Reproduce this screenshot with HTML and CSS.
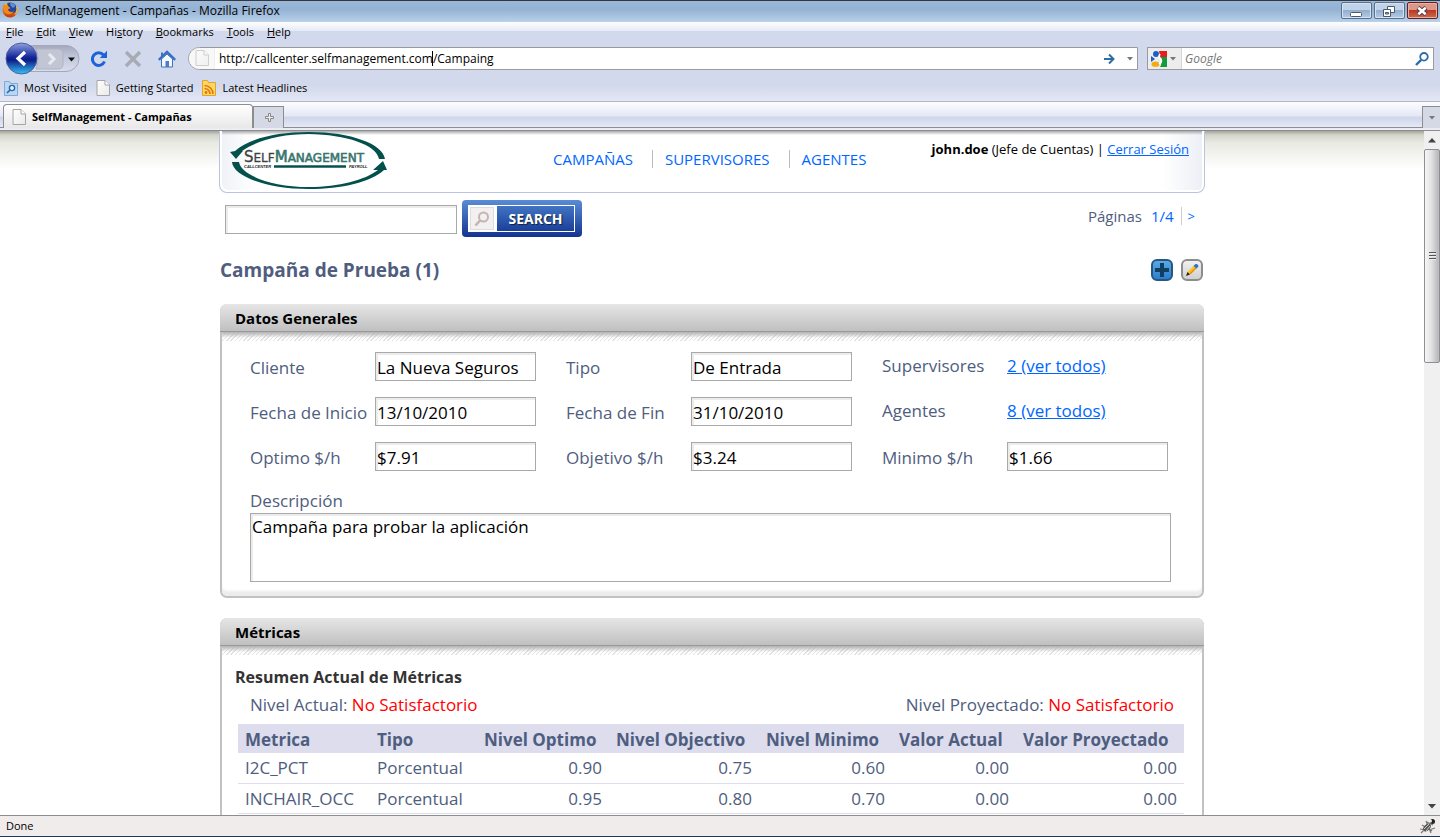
FILE: index.html
```html
<!DOCTYPE html>
<html lang="es">
<head>
<meta charset="utf-8">
<title>SelfManagement - Campañas</title>
<link rel="stylesheet" href="styles.css">
</head>
<body>
<svg class="defs" width="0" height="0" aria-hidden="true">
  <defs>
    <linearGradient id="pageFill" x1="0" y1="0" x2="1" y2="1"><stop offset="0" stop-color="#fff"/><stop offset="1" stop-color="#e9e9e9"/></linearGradient>
    <linearGradient id="foxFill" x1="0" y1="0" x2="0" y2="1"><stop offset="0" stop-color="#ffb52b"/><stop offset="1" stop-color="#c8340c"/></linearGradient>
    <symbol id="doc" viewBox="0 0 14 16"><path d="M1 .5h8l4.500 4.500v10.500H1z" fill="url(#pageFill)" stroke="#a5a5a5"/><path d="M9 .5V5h4.500" fill="#fff" stroke="#a5a5a5"/></symbol>
  </defs>
</svg>

<header class="chrome">
  <div class="titlebar">
    <svg class="fox" viewBox="0 0 16 16"><circle cx="8" cy="8" r="7.500" fill="url(#foxFill)"/><path d="M5 1.500c3-2 8-.5 9.500 3 .8 3-.5 5.500-3 6.500C8 12 5 10 5 7l3-.5L6 4z" fill="#24459a"/><path d="M8 1c3-.5 5 1 5.500 3L11 6 8.500 3.500z" fill="#5b8fd6"/><path d="M.8 4.500 2 2l2 2 2.500.5L8.500 6 6 7.200c.5 2.500 3 3.500 6 2-2 3.500-7 4-9.500 1z" fill="#f08a1a"/><path d="M14.500 4.500c1 3 .5 6-1.500 8" fill="none" stroke="#ffd24a"/></svg>
    <span class="window-title">SelfManagement - Campañas - Mozilla Firefox</span>
    <button class="win-btn" aria-label="Minimize"><svg width="30" height="16"><rect x="9.500" y="9.500" width="11" height="4" rx="1" fill="#fff" stroke="#4d586d"/></svg></button>
    <button class="win-btn" aria-label="Restore"><svg width="30" height="16"><path d="M13.500 3.500h7v6h-7z" fill="#fff" stroke="#4d586d"/><path d="M9.500 6.500h7v7h-7z" fill="#fff" stroke="#4d586d"/><path d="M11.500 9.500h3v1.500h-3z" fill="#9db7d4" stroke="#4d586d"/></svg></button>
    <button class="win-btn win-close" aria-label="Close"><svg width="30" height="16"><path d="m11 4.500 8 7m0-7-8 7" stroke="#5a4048" stroke-width="4.500"/><path d="m11.300 4.800 7.400 6.400m0-6.400-7.400 6.400" stroke="#fff" stroke-width="2.500"/></svg></button>
  </div>

  <nav class="menubar">
    <a href="#"><u>F</u>ile</a><a href="#"><u>E</u>dit</a><a href="#"><u>V</u>iew</a><a href="#">Hi<u>s</u>tory</a><a href="#"><u>B</u>ookmarks</a><a href="#"><u>T</u>ools</a><a href="#"><u>H</u>elp</a>
  </nav>

  <div class="toolbar">
    <svg class="backfwd" viewBox="0 0 78 34">
      <defs>
        <linearGradient id="well" x1="0" y1="0" x2="0" y2="1"><stop offset="0" stop-color="#a5a9bd"/><stop offset=".4" stop-color="#bfc4d8"/><stop offset="1" stop-color="#d9deee"/></linearGradient>
        <linearGradient id="back" x1="0" y1="0" x2="0" y2="1"><stop offset="0" stop-color="#8fa2dc"/><stop offset=".45" stop-color="#16299c"/><stop offset=".55" stop-color="#0d1c86"/><stop offset="1" stop-color="#35c3f5"/></linearGradient>
      </defs>
      <path d="M14 3.500h50a12.500 12.500 0 0 1 0 26H14a14 14 0 0 1 0-26z" fill="url(#well)" stroke="#a4a8ba"/>
      <path d="M34 7h22q5 0 5 5v10q0 5-5 5H34q4-10 0-20z" fill="#c2c6d4" stroke="#aeb3c4"/>
      <circle cx="19.500" cy="16.500" r="15.500" fill="url(#back)" stroke="#4a5ca6"/>
      <path d="m23 10-7 6.500 7 6.500" fill="none" stroke="#fff" stroke-width="3.200"/>
      <path d="m47 12 5 5-5 5" fill="none" stroke="#e8eaf2" stroke-width="3"/>
      <path d="M66 15.500h7l-3.500 4z" fill="#111"/>
    </svg>
    <svg class="tool tool-reload" viewBox="0 0 18 18"><path d="M14.500 11.500A6.300 6.300 0 1 1 13.500 5" fill="none" stroke="#1d63d8" stroke-width="3"/><path d="M17 .8V8H9.800z" fill="#1d63d8"/></svg>
    <svg class="tool tool-stop" viewBox="0 0 18 18"><path d="m2 2 14 14M16 2 2 16" stroke="#a7abb5" stroke-width="3.400"/></svg>
    <svg class="tool" viewBox="0 0 18 18"><path d="M3.500 9v8h11V9L9 4z" fill="#f5f9ff" stroke="#4173bb"/><path d="M.8 9.800 9 2l8.200 7.800" fill="none" stroke="#356fc7" stroke-width="2.400"/><path d="M7.500 11h3.500v6H7.500z" fill="#4a7fcc"/><path d="M3 2.500h2v4H3z" fill="#4173bb"/></svg>
    <div class="urlbar">
      <span class="favicon"><svg width="14" height="16" opacity=".5"><use href="#doc"/></svg></span>
      <input class="url-input" type="text" aria-label="Location" value="http://callcenter.selfmanagement.com/Campaing">
      <span class="caret"></span>
      <svg class="go" viewBox="0 0 12 12"><path d="M1 6h9M6 1.500 10.500 6 6 10.500" fill="none" stroke="#2c6da8" stroke-width="2"/></svg>
      <svg class="drop" viewBox="0 0 6 4"><path d="M0 0h6L3 3.500z" fill="#777"/></svg>
    </div>
    <div class="searchbar">
      <span class="engine"><svg width="16" height="16" viewBox="0 0 16 16"><path d="M8 0h8v6H9z" fill="#ea1c1c"/><path d="M9 6h7v10H9q3-5 0-10z" fill="#139b3c"/><circle cx="5" cy="3" r="3" fill="#1c5fc9"/><path d="M0 5 4 8 0 11z" fill="#1c5fc9"/><ellipse cx="4.500" cy="13.200" rx="4" ry="2.600" fill="#f2ab12"/><path d="M9 3q-2 3 1 5 1.500 3-2 5" fill="none" stroke="#fff" stroke-width="1.600"/></svg>
      <svg class="drop" viewBox="0 0 6 4"><path d="M0 0h6L3 3.500z" fill="#777"/></svg></span>
      <input class="web-search" type="text" aria-label="Search the web" placeholder="Google">
      <svg class="lens" viewBox="0 0 14 14"><circle cx="9" cy="4.800" r="3.800" fill="none" stroke="#2c6da8" stroke-width="1.800"/><path d="M6.200 7.800 1 13" stroke="#2c6da8" stroke-width="2.400"/></svg>
    </div>
  </div>

  <nav class="bookmarks">
    <a href="#"><svg width="14" height="16"><path d="M.5 1.500h5l1 2h7v12H.5z" fill="#b9d7f3" stroke="#7fa9d6"/><circle cx="8" cy="8" r="2.600" fill="#e8f3fd" stroke="#2b66ad" stroke-width="1.400"/><path d="m6 10-3 3" stroke="#2b66ad" stroke-width="1.600"/></svg>Most Visited</a>
    <a href="#"><svg width="14" height="16"><use href="#doc"/></svg>Getting Started</a>
    <a href="#"><svg width="14" height="16"><path d="M.5 .5h5l1 2h7v13H.5z" fill="#fcd862" stroke="#e0a52c"/><circle cx="4" cy="12.500" r="1.400" fill="#e8740c"/><path d="M2.500 8.500a5.500 5.500 0 0 1 5.500 5.500M2.500 5.500a8.500 8.500 0 0 1 8.500 8.500" fill="none" stroke="#e8740c" stroke-width="1.600"/></svg>Latest Headlines</a>
  </nav>

  <div class="tabs">
    <button class="tab"><svg width="14" height="16"><use href="#doc"/></svg>SelfManagement - Campañas</button>
    <button class="tab-new" aria-label="New tab"><svg width="9" height="9"><path d="M3.500 .5h2v3h3v2h-3v3h-2v-3h-3v-2h3z" fill="#eee" stroke="#888"/></svg></button>
    <button class="tab-list" aria-label="List all tabs"><svg class="drop" viewBox="0 0 6 4"><path d="M0 0h6L3 3.500z" fill="#777"/></svg></button>
  </div>
</header>

<div class="viewport">
  <main class="page">
    <div class="container">
      <header class="site-header">
        <svg class="logo" viewBox="0 0 160 60" role="img" aria-label="SelfManagement">
          <path d="M7 20C20 8 48 1 81 1c42 0 74 12 76 27h-6C149 14 118 3.500 81 3 52 3 28 10 14 20l1 1h-1l-6 7-6-7z" fill="#04504c"/>
          <path d="M4 31h7c2 13 32 25 70 25 30 0 56-7 69-17h-5l10-9 4 9h-3C143 51 114 58 81 58 38 58 5 45 4 31z" fill="#04504c"/>
          <text x="16" y="31" class="logo-self">S<tspan class="logo-caps">ELF</tspan><tspan class="logo-brand">M</tspan><tspan class="logo-brand logo-caps">ANAGEMENT</tspan></text>
          <path d="M46 35.500h72" stroke="#04504c" stroke-width="2.500"/>
          <text x="16" y="37" class="logo-tag">CALLCENTER</text>
          <text x="121" y="37" class="logo-tag">PAYROLL</text>
        </svg>
        <nav class="site-nav"><a href="#">CAMPAÑAS</a><a href="#">SUPERVISORES</a><a href="#">AGENTES</a></nav>
        <p class="user"><b>john.doe</b> (Jefe de Cuentas) | <a class="link" href="#">Cerrar Sesión</a></p>
      </header>

      <div class="search-row">
        <input class="field search-field" type="text" aria-label="Buscar">
        <button class="search-btn"><span class="search-icon"><svg width="18" height="18" viewBox="0 0 18 18"><circle cx="10.500" cy="7" r="4.500" fill="none" stroke="#c4b5b0" stroke-width="2"/><path d="m7 10.500-4.500 5" stroke="#c4b5b0" stroke-width="2.600"/></svg></span><span class="search-label">SEARCH</span></button>
        <nav class="pager">Páginas <a href="#" class="pager-count">1/4</a><a href="#" class="pager-next">&gt;</a></nav>
      </div>

      <div class="title-row">
        <h1>Campaña de Prueba (1)</h1>
        <button class="icon-btn icon-add" aria-label="Agregar"><svg width="16" height="16"><path d="M6 1h4v5h5v4h-5v5H6v-5H1V6h5z" fill="#11405f"/></svg></button>
        <button class="icon-btn" aria-label="Editar"><svg width="16" height="16"><path d="m3 13 1-3.500 6-6 2.500 2.500-6 6z" fill="#ffc21c"/><path d="m5.500 11.500 6-6 1 .8-5.500 5.700z" fill="#e8890c"/><path d="m9.500 4 2-2q1.500-.5 2.500 1t0 2l-1.500 1.500z" fill="#2f6fd0"/><path d="m2 14 1.500-4 2.500 2.500z" fill="#222"/></svg></button>
      </div>

      <section class="panel">
        <h2>Datos Generales</h2>
        <div class="panel-body panel-end">
          <form class="form">
            <label for="cliente">Cliente</label><input class="field" id="cliente" type="text" value="La Nueva Seguros">
            <label for="tipo">Tipo</label><input class="field" id="tipo" type="text" value="De Entrada">
            <span class="plain">Supervisores</span><a class="link plain" href="#">2 (ver todos)</a>
            <label for="inicio">Fecha de Inicio</label><input class="field" id="inicio" type="text" value="13/10/2010">
            <label for="fin">Fecha de Fin</label><input class="field" id="fin" type="text" value="31/10/2010">
            <span class="plain">Agentes</span><a class="link plain" href="#">8 (ver todos)</a>
            <label for="optimo">Optimo $/h</label><input class="field" id="optimo" type="text" value="$7.91">
            <label for="objetivo">Objetivo $/h</label><input class="field" id="objetivo" type="text" value="$3.24">
            <label for="minimo">Minimo $/h</label><input class="field" id="minimo" type="text" value="$1.66">
            <div class="descr"><label for="descripcion">Descripción</label><textarea class="field" id="descripcion">Campaña para probar la aplicación</textarea></div>
          </form>
        </div>
      </section>

      <section class="panel">
        <h2>Métricas</h2>
        <div class="panel-body metrics">
          <h3>Resumen Actual de Métricas</h3>
          <div class="levels"><span>Nivel Actual: <em>No Satisfactorio</em></span><span>Nivel Proyectado: <em>No Satisfactorio</em></span></div>
          <table>
            <colgroup><col class="c-metric"><col class="c-type"><col class="c-opt"><col class="c-obj"><col class="c-min"><col class="c-act"><col></colgroup>
            <thead><tr><th>Metrica</th><th>Tipo</th><th>Nivel Optimo</th><th>Nivel Objectivo</th><th>Nivel Minimo</th><th>Valor Actual</th><th>Valor Proyectado</th></tr></thead>
            <tbody>
              <tr><td>I2C_PCT</td><td>Porcentual</td><td>0.90</td><td>0.75</td><td>0.60</td><td>0.00</td><td>0.00</td></tr>
              <tr><td>INCHAIR_OCC</td><td>Porcentual</td><td>0.95</td><td>0.80</td><td>0.70</td><td>0.00</td><td>0.00</td></tr>
            </tbody>
          </table>
        </div>
      </section>
    </div>
  </main>
  <div class="scrollbar" aria-hidden="true">
    <svg class="arrow" viewBox="0 0 8 5"><path d="M0 4.500h8L4 0z" fill="#444"/></svg>
    <div class="track"><div class="thumb"><i></i><i></i><i></i></div></div>
    <svg class="arrow" viewBox="0 0 8 5"><path d="M0 0h8L4 4.500z" fill="#444"/></svg>
  </div>
</div>

<footer class="status"><span>Done</span>
  <svg class="bug" viewBox="0 0 18 18"><path d="m2 16 9-9M3 8l10 6M7 4l5 12M1 12l6 1m1-8 6 3m-4 5 6-2" stroke="#777" stroke-width="1.200"/><ellipse cx="8" cy="10.500" rx="4.500" ry="3" transform="rotate(-45 8 10.500)" fill="#555"/><path d="m5 12 5-5m-3 7 4-5" stroke="#ccc"/><circle cx="13.500" cy="4.500" r="2.500" fill="#222"/><circle cx="11.500" cy="4" r="1.500" fill="#eee"/></svg>
</footer>
</body>
</html>
```
FILE: styles.css
```css
* { box-sizing: border-box; }

body {
  margin: 0;
  height: 100vh;
  display: flex;
  flex-direction: column;
  overflow: hidden;
  background: #fff;
  color: #000;
  font: 12px/16px "Open Sans", "Noto Sans", sans-serif;
}

button, input, textarea { font: inherit; color: inherit; margin: 0; border-radius: 0; }
button { padding: 0; border: 0; background: none; }
a { color: inherit; text-decoration: none; }
svg { display: block; flex: none; }
.defs { position: absolute; }

/* Browser window */
.chrome { flex: none; background: #d3d9ec; font-size: 11px; }

.titlebar {
  display: flex;
  height: 22px;
  padding: 0 2px;
  gap: 2px;
  border-top: 1px solid #35373f;
  background: linear-gradient(#9bb8d9, #94b2d3 40%, #b9d1ea);
}
.fox { width: 16px; height: 16px; margin-top: 1px; }
.window-title { flex: 1; margin-left: 5px; line-height: 20px; font-size: 12px; }
.win-btn {
  width: 31px;
  height: 17px;
  margin-top: 1px;
  border: 1px solid #56708f;
  border-radius: 2px;
  box-shadow: inset 0 0 0 1px #d4e2f1;
  background: linear-gradient(#c1d3e8 45%, #93afcf 50%, #b4cbe4);
}
.win-btn svg { margin: -1px; }
.win-close {
  border-color: #611f1f;
  box-shadow: inset 0 0 0 1px #e8b1a4;
  background: linear-gradient(#dd9789 45%, #b93a22 50%, #cc6a50);
}

.menubar {
  display: flex;
  gap: 13px;
  height: 20px;
  padding-left: 6px;
  line-height: 20px;
  background: linear-gradient(#fff, #e4e9f5 45%, #d3d9ec 46%);
}

.toolbar { display: flex; align-items: center; height: 33px; padding: 0 6px 0 2px; }
.backfwd { width: 78px; height: 34px; }
.tool { width: 18px; height: 18px; margin-left: 16px; }
.tool-reload { margin-left: 10px; }

.urlbar, .searchbar {
  display: flex;
  align-items: center;
  height: 23px;
  border: 1px solid #9a9a9e;
  background: #fff;
}
.urlbar { position: relative; flex: 1; margin-left: 12px; border-radius: 12px 0 0 12px; }
.searchbar { width: 287px; margin-left: 9px; }
.favicon { padding: 2px 5px 3px 6px; background: #f8f8f8; border-right: 1px solid #eee; border-radius: 12px 0 0 12px; }
.url-input, .web-search { flex: 1; min-width: 0; border: 0; padding: 0 0 0 4px; background: none; outline: 0; font-size: 12px; }
.web-search { padding-left: 3px; }
.web-search::placeholder { color: #777; font-style: italic; opacity: 1; }
.caret { position: absolute; left: 243px; top: 3px; width: 1px; height: 15px; background: #000; }
.go { width: 12px; height: 12px; margin-right: 12px; }
.drop { width: 6px; height: 4px; }
.urlbar .drop { margin-right: 4px; }
.engine { display: flex; align-items: center; gap: 3px; height: 21px; padding: 0 5px 0 3px; background: #ededed; border-right: 1px solid #d5d5d5; }
.lens { width: 14px; height: 14px; margin-right: 4px; }

.bookmarks {
  display: flex;
  align-items: center;
  gap: 9px;
  height: 27px;
  padding-left: 4px;
  border-bottom: 1px solid #b3b6c6;
  background: linear-gradient(#d3d9ec 40%, #e3e7f5);
}
.bookmarks a { display: flex; align-items: center; gap: 6px; }

.tabs {
  display: flex;
  align-items: flex-end;
  height: 29px;
  padding: 0 0 3px 3px;
  background: linear-gradient(#8d8d8d, #8d8d8d) 0 100% / 100% 1px no-repeat, linear-gradient(#eee, #eee) 0 27px / 100% 1px no-repeat, linear-gradient(#8d8d8d, #8d8d8d) 0 25px / 100% 1px no-repeat, linear-gradient(#fdfdff, #e3e8f5 14px, #ced6ea 15px, #e9ecfa 27px);
}
.tab {
  display: flex;
  align-items: center;
  gap: 6px;
  width: 250px;
  height: 24px;
  padding-left: 8px;
  border: 1px solid #8d8d8d;
  border-bottom: 0;
  border-radius: 4px 4px 0 0;
  background: linear-gradient(#fff, #e8e8e8);
  font-weight: 700;
}
.tab-new { width: 31px; height: 22px; padding-left: 11px; border: 1px solid #8d8d8d; border-bottom: 0; background: #d5d9e6; }
.tab-list { width: 18px; height: 22px; margin-left: auto; padding-left: 6px; border: 1px solid #8d8d8d; border-width: 1px 0 0 1px; background: #d5d9e6; }

.viewport { flex: 1; display: flex; min-height: 0; }
.page {
  flex: 1;
  overflow: hidden;
  background: linear-gradient(#a2a39b, #d3d5cb 4px, #e9eae2 12px, #fff 38px);
}

.scrollbar { display: flex; flex-direction: column; align-items: center; width: 16px; background: #f0f0f0; }
.arrow { width: 8px; height: 5px; margin: 7px 0 6px; }
.track { flex: 1; width: 100%; }
.thumb {
  display: flex;
  flex-direction: column;
  align-items: center;
  justify-content: center;
  gap: 1px;
  height: 33%;
  border: 1px solid #8e8e8e;
  border-radius: 2px;
  background: linear-gradient(90deg, #f6f6f6, #e2e2e4 45%, #bcbcc0 90%);
}
.thumb i { width: 7px; height: 2px; background: #555; border-bottom: 1px solid #eee; }

.status {
  flex: none;
  display: flex;
  align-items: center;
  justify-content: space-between;
  height: 22px;
  padding: 0 3px 1px 6px;
  border-top: 1px solid #8d8d8d;
  border-bottom: 1px solid #24384f;
  background: #f0eceb;
  font-size: 11px;
}
.bug { width: 18px; height: 18px; }

/* Application page */
.container { width: 986px; max-width: 100%; margin: 0 auto; color: #4f5d7e; font-size: 17px; line-height: 24px; }

.site-header {
  display: flex;
  height: 62px;
  padding: 0 15px 0 8px;
  border: 1px solid #bcc2e2;
  border-top: 0;
  border-radius: 0 0 8px 8px;
  box-shadow: inset 2px -2px 0 #fff, inset -2px 0 0 #fff;
  background: linear-gradient(#aaa, #fff0) 0 0 / 100% 4px no-repeat, linear-gradient(90deg, #eff1f7, #fff 36px, #fff calc(100% - 42px), #eceff6);
}
.logo { width: 160px; height: 60px; }
.logo-self { font: 15px "DejaVu Sans", sans-serif; fill: #3d4143; stroke: #3d4143; stroke-width: .3px; }
.logo-caps { font-size: 12px; }
.logo-brand { fill: #38756f; stroke: #38756f; stroke-width: .6px; }
.logo-tag { font: italic bold 4px "Liberation Sans", sans-serif; fill: #222; }
.site-nav { display: flex; flex: 1; align-items: center; margin-top: -5px; padding-left: 153px; font-size: 15px; color: #0066ff; }
.site-nav a { padding: 0 19px 0 12px; line-height: 18px; }
.site-nav a + a { border-left: 1px solid #bbb; }
.user { margin: 9px 0 0; font-size: 13px; line-height: 18px; color: #000; }
.link { color: #0066ff; text-decoration: underline; }

.field {
  height: 29px;
  border: 1px solid #a9a9a9;
  padding: 1px 1px 0;
  background: #fff;
  color: #000;
  box-shadow: inset 2px 2px 0 #ececec;
}

.search-row { display: flex; align-items: center; height: 37px; margin: 7px 6px 0; }
.search-field { width: 232px; margin: 1px 5px 0 0; }
.search-btn {
  display: flex;
  width: 120px;
  height: 37px;
  padding: 5px 7px;
  border-radius: 4px;
  background: linear-gradient(#5a8cd5, #13348f);
  color: #fff;
  font-size: 14px;
  font-weight: 700;
}
.search-icon { display: grid; place-items: center; width: 28px; height: 27px; border: 2px solid #fff; background: #f2f0f0; box-shadow: inset 0 0 0 1px #ddd; margin-left: -1px; }
.search-label { flex: 1; line-height: 25px; border: 1px solid #fff; background: linear-gradient(#4274c2, #1b3f9b); text-shadow: 1px 1px 1px #123; }
.pager { display: flex; margin: 0 4px 5px auto; font-size: 15px; line-height: 18px; }
.pager a { color: #0066ff; }
.pager-count { margin-left: 9px; padding-right: 7px; border-right: 1px solid #ccc; }
.pager-next { padding-left: 6px; font-size: 13px; }

.title-row { display: flex; align-items: center; gap: 8px; margin: 21px 2px 22px 1px; }
h1 { flex: 1; margin: 0; font-size: 19px; line-height: 24px; }
.icon-btn {
  display: grid;
  place-items: center;
  width: 22px;
  height: 22px;
  border: 2px solid #8d8d8d;
  border-radius: 6px;
  background: linear-gradient(#f0f0f0, #d0d0d0);
}
.icon-add { border-color: #25577f; background: linear-gradient(#5aa9e6, #2b7ed0); }

.panel { margin: 0 1px 20px; border: 2px solid #c1c1c1; border-top: 0; border-radius: 7px; }
.panel h2 {
  margin: 0 -2px;
  padding: 2px 15px 0;
  height: 28px;
  border-radius: 7px 7px 0 0;
  border-bottom: 1px solid #999;
  background: linear-gradient(#e6e6e6, #c0c0c0);
  color: #000;
  font-size: 15px;
  line-height: 25px;
}
.panel-body {
  padding: 20px 28px 14px;
  background: linear-gradient(#b2b2b2, #fff0) 0 0 / 100% 6px no-repeat, repeating-linear-gradient(135deg, #e2e2e2 0 1px, #fff 1px 3px) 0 0 / 100% 9px no-repeat;
}
.panel-end { box-shadow: inset 0 -6px 3px -1px #ececec; border-radius: 0 0 5px 5px; }
.form { display: grid; grid-template-columns: 125px 191px 125px 191px 125px 161px; row-gap: 16px; line-height: 29px; white-space: nowrap; }
.form > label { height: 29px; padding-top: 1px; }
.form .field { width: 161px; }
.form .plain { height: 29px; margin-top: -1px; }
.descr { grid-column: 1 / -1; display: flex; flex-direction: column; width: 921px; padding-top: 2px; line-height: 24px; }
.form .descr .field { width: 100%; height: 69px; resize: none; line-height: 24px; }

.metrics { padding: 19px 18px 14px 16px; }
h3 { margin: 0 -3px; color: #333; font-size: 16px; line-height: 24px; }
.levels { display: flex; justify-content: space-between; padding: 4px 10px 7px 12px; }
.levels em { color: #ff0000; font-style: normal; }
table { width: 100%; border-collapse: collapse; table-layout: fixed; white-space: nowrap; }
.c-metric { width: 132px; }
.c-type { width: 107px; }
.c-opt { width: 132px; }
.c-obj { width: 150px; }
.c-min { width: 133px; }
.c-act { width: 124px; }
th { height: 29px; padding: 3px 7px 0; background: #ddddee; text-align: left; }
td { height: 30px; padding: 3px 7px 2px; border-bottom: 1px solid #ddddee; }
td:nth-child(n + 3) { text-align: right; }
```
